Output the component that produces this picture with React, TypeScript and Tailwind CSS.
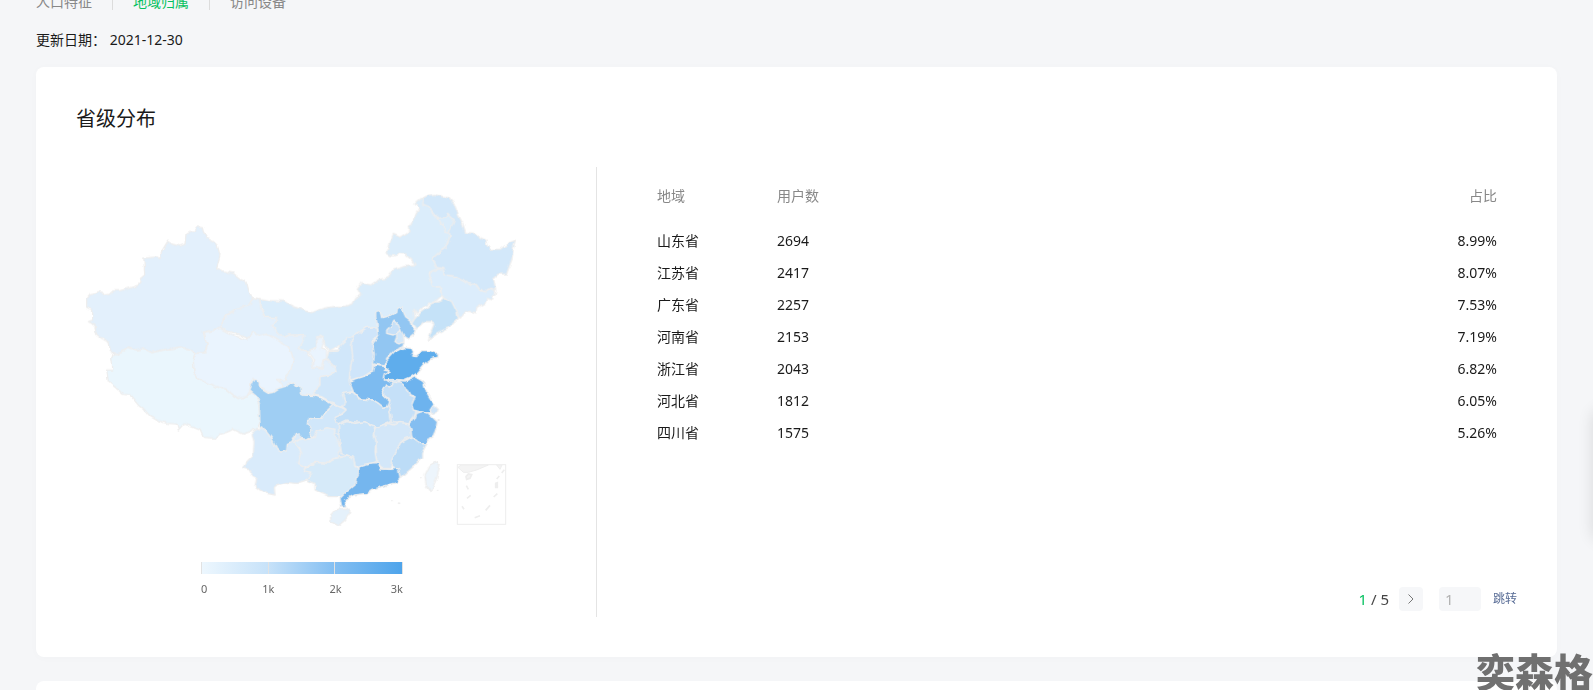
import { useState } from 'react';
import type { FormEvent } from 'react';

type Region = {
  name: string;
  users: number;
  share: string;
};

type Province = {
  id: string;
  fill: string;
  points: string;
};

type Sheet = {
  id: string;
  transform: string;
  provinces: Province[];
};

const TABS = ['人口特征', '地域归属', '访问设备'];

const REGIONS: Region[] = [
  { name: '山东省', users: 2694, share: '8.99%' },
  { name: '江苏省', users: 2417, share: '8.07%' },
  { name: '广东省', users: 2257, share: '7.53%' },
  { name: '河南省', users: 2153, share: '7.19%' },
  { name: '浙江省', users: 2043, share: '6.82%' },
  { name: '河北省', users: 1812, share: '6.05%' },
  { name: '四川省', users: 1575, share: '5.26%' },
];

const PAGE_COUNT = 5;

// Each sheet has its own origin, later sheets are painted over earlier ones.
const SHEETS: Sheet[] = [
  {
    id: 'northeast',
    transform: 'translate(690 0)',
    provinces: [
      {
        id: 'neimenggu',
        fill: '#dbedfb',
        points:
          '-122,356 -90,362 -50,363 -20,380 15,392 35,398 70,385 100,380 140,378 155,372 165,355 182,345 172,325 185,308 200,312 215,315 240,298 262,295 278,272 310,260 345,257 335,240 315,222 300,220 290,226 275,228 258,218 268,190 280,163 300,172 330,152 328,140 345,108 358,85 345,72 360,58 372,52 390,80 400,105 412,115 440,105 450,100 463,120 448,150 450,170 435,205 420,215 398,235 410,260 430,265 388,280 398,320 420,325 425,348 405,365 370,380 350,400 342,388 345,415 335,430 300,440 230,445 215,440 165,465 150,475 120,495 90,515 75,500 70,470 60,465 50,500 30,520 10,510 -5,515 -30,510 -50,475 -85,435 -70,412 -107,412',
      },
      {
        id: 'heilongjiang',
        fill: '#d3e8fa',
        points:
          '372,52 388,45 405,43 430,50 450,55 462,70 475,105 488,130 497,158 525,160 545,175 558,180 560,195 570,208 600,208 625,190 647,180 640,205 635,240 622,275 620,282 595,282 580,295 587,330 570,325 555,335 545,328 540,332 525,310 515,318 490,300 470,290 435,285 425,265 410,262 398,235 420,215 435,205 450,170 448,155 437,150 430,135 415,118 395,95 388,80 368,72',
      },
      {
        id: 'daxinganling',
        fill: '#dbedfb',
        points: '412,115 435,112 443,100 463,120 455,140 448,156 436,153 430,135 420,130',
      },
      {
        id: 'jilin',
        fill: '#dcedfc',
        points:
          '388,280 410,268 428,265 435,285 470,290 490,300 515,318 525,310 540,332 555,335 570,325 587,333 585,345 575,350 575,360 560,355 555,370 530,385 528,398 500,392 480,415 470,395 455,365 435,352 425,348 422,325 398,320',
      },
      {
        id: 'liaoning',
        fill: '#c5e2f8',
        points:
          '435,352 455,365 470,395 475,415 450,440 420,455 385,480 390,462 402,432 392,425 375,425 360,440 348,447 335,430 345,415 365,395 400,370 425,362',
      },
    ],
  },
  {
    id: 'northwest',
    transform: 'translate(480 300)',
    provinces: [
      {
        id: 'gansu',
        fill: '#e3f0fc',
        points:
          '68,53 88,56 92,80 103,112 135,113 142,122 125,135 160,172 175,165 205,165 222,163 220,180 205,205 230,215 245,235 250,262 275,265 280,240 292,237 318,262 315,278 300,285 270,290 270,315 255,330 258,345 220,350 180,330 145,330 150,300 188,250 150,200 70,180 -30,145 -15,110 20,85 60,72',
      },
    ],
  },
  {
    id: 'xinjiang',
    transform: 'translate(0 0)',
    provinces: [
      {
        id: 'xinjiang',
        fill: '#e3f0fc',
        points:
          '50,358 60,345 80,340 85,335 97,337 102,345 118,343 130,332 150,332 205,316 212,295 224,285 222,240 218,235 258,231 270,235 276,212 293,184 308,193 330,198 345,193 348,162 370,155 380,141 397,143 400,155 412,175 430,185 442,197 450,225 440,263 455,272 490,280 515,300 530,308 540,345 548,353 540,372 520,380 495,390 465,408 460,425 450,445 425,452 400,457 408,470 412,490 405,515 395,522 375,518 365,510 345,505 330,502 300,507 270,512 245,518 220,505 200,510 175,502 160,515 145,522 130,518 120,510 118,488 95,475 80,463 75,440 65,430 55,425 68,420 68,390 50,382',
      },
    ],
  },
  {
    id: 'plateau',
    transform: 'translate(0 450)',
    provinces: [
      {
        id: 'xizang',
        fill: '#eaf6fd',
        points:
          '130,70 145,72 160,65 175,52 200,60 220,55 245,68 270,62 300,57 330,52 365,60 375,70 370,90 372,125 385,148 410,158 440,170 470,178 490,195 505,205 520,200 535,195 545,182 560,200 567,225 569,280 560,300 550,295 540,305 520,312 490,298 470,307 450,312 435,325 400,322 390,300 370,292 345,282 335,288 325,300 320,282 290,280 260,270 240,258 220,235 205,225 180,195 160,193 140,175 115,155 110,120 128,120 127,100 125,85',
      },
      {
        id: 'qinghai',
        fill: '#eaf4fe',
        points:
          '400,7 425,2 450,-5 475,8 500,20 530,30 540,20 550,5 570,17 590,12 615,25 635,38 655,50 665,70 672,95 660,125 645,140 650,150 620,148 640,165 640,177 625,185 610,193 590,185 570,172 553,147 543,155 540,182 530,200 505,205 490,195 470,178 440,170 410,158 385,148 372,125 370,90 378,70 405,68 412,45 404,25',
      },
    ],
  },
  {
    id: 'central',
    transform: 'translate(480 300)',
    provinces: [
      {
        id: 'base',
        fill: '#d1e7fa',
        points: '345,210 440,180 500,210 530,240 530,300 585,400 560,480 500,550 450,560 330,530 260,450 300,370',
      },
      {
        id: 'ningxia',
        fill: '#eaf4fe',
        points: '260,170 280,170 282,188 275,207 290,212 290,235 278,240 275,268 262,262 250,265 250,235 235,215 260,205',
      },
      {
        id: 'shaanxi',
        fill: '#d1e7fa',
        points:
          '370,170 365,200 368,230 362,260 357,300 370,335 345,340 337,342 345,370 338,380 300,365 275,350 255,345 255,330 270,315 270,290 300,285 318,275 315,262 290,237 295,215 325,213 335,190 355,172',
      },
      {
        id: 'shanxi',
        fill: '#cfe5fa',
        points: '370,170 385,160 410,143 440,140 445,165 430,180 428,190 433,225 430,270 400,290 360,300 362,260 368,230 365,200',
      },
      {
        id: 'hebei',
        fill: '#92c6f2',
        points:
          '437,97 450,95 455,113 485,105 500,98 502,85 515,80 520,95 527,110 540,120 545,140 558,155 550,165 535,177 520,165 522,190 518,200 495,210 470,235 465,258 430,252 433,225 428,190 437,180 445,165 443,140 437,115',
      },
      { id: 'beijing', fill: '#c6e0f8', points: '470,150 485,135 492,123 505,135 512,150 500,160 490,165 470,160' },
      { id: 'tianjin', fill: '#d3e8fa', points: '500,160 512,150 520,165 522,185 510,192 495,185 500,170' },
      {
        id: 'henan',
        fill: '#7dbbf0',
        points:
          '357,303 400,290 430,275 435,255 468,260 460,270 480,275 460,292 470,300 492,310 480,320 470,315 455,340 480,365 475,378 460,382 445,370 430,360 390,357 370,335',
      },
      {
        id: 'hubei',
        fill: '#c2dff8',
        points:
          '337,340 368,336 390,357 430,360 445,370 460,382 475,380 482,405 485,425 470,430 440,447 410,428 370,425 350,420 325,432 310,412 335,402 348,388 338,380 345,365',
      },
      {
        id: 'anhui',
        fill: '#c5e0f8',
        points:
          '492,305 500,308 510,302 520,310 525,320 540,345 555,352 545,375 558,395 550,415 535,432 520,430 485,428 482,405 475,378 480,360 455,340 470,315 485,318',
      },
      {
        id: 'shandong',
        fill: '#5fadec',
        points:
          '520,203 545,205 550,215 545,228 560,230 575,212 600,212 625,220 622,232 605,235 585,250 560,280 545,290 520,300 495,298 460,300 462,285 480,275 468,265 470,240 490,218',
      },
      {
        id: 'jiangsu',
        fill: '#6db3ee',
        points: '505,302 530,303 555,290 580,305 590,335 605,360 615,372 605,385 600,398 580,398 550,390 545,375 555,350 540,345 525,318',
      },
      { id: 'shanghai', fill: '#cfe5f9', points: '600,390 610,375 622,385 618,398 605,402' },
      {
        id: 'zhejiang',
        fill: '#84bef1',
        points: '560,400 575,395 595,400 622,425 618,445 610,470 600,475 590,492 560,490 550,475 535,450 535,440 555,415',
      },
      {
        id: 'chongqing',
        fill: '#d1e7fa',
        points: '305,370 330,380 348,390 335,402 312,412 325,430 328,460 310,458 300,448 280,450 255,475 240,462 232,430 240,412 275,415',
      },
    ],
  },
  {
    id: 'south',
    transform: 'translate(480 660)',
    provinces: [
      {
        id: 'yunnan',
        fill: '#d9ebfb',
        points:
          '90,90 97,80 105,90 125,115 140,145 152,156 170,152 172,130 190,120 195,102 210,98 215,115 195,125 210,150 215,165 208,190 225,200 222,210 245,222 235,238 200,250 170,247 140,255 133,262 135,285 110,280 90,270 75,258 80,235 65,230 65,210 40,205 50,185 70,165 72,125 65,100 75,85',
      },
      {
        id: 'sichuan',
        fill: '#9fcef3',
        points:
          '63,-45 73,-65 87,-50 90,-35 115,-20 130,-22 145,-32 170,-38 175,-50 188,-55 195,-42 212,-38 215,-15 255,-13 285,0 308,13 290,30 275,55 240,52 232,70 245,90 240,102 252,115 235,112 225,120 212,115 210,98 195,102 185,125 172,130 170,152 152,156 140,145 125,115 105,90 97,80 90,90 88,10 78,-15 60,-30',
      },
      {
        id: 'guizhou',
        fill: '#ddedfb',
        points:
          '240,115 252,113 258,95 290,83 315,88 312,105 322,120 332,145 325,165 335,172 310,175 295,190 255,187 225,200 205,190 215,160 208,145 190,130 210,118',
      },
      {
        id: 'hunan',
        fill: '#c9e3f9',
        points: '325,75 350,65 375,70 405,65 420,75 435,80 430,100 438,120 435,155 440,185 420,190 390,197 375,200 370,172 350,165 335,160 328,120',
      },
      {
        id: 'jiangxi',
        fill: '#d3e7f9',
        points: '435,85 450,78 475,70 490,75 510,67 535,72 543,88 545,110 525,115 510,130 500,150 485,185 482,205 455,205 440,188 438,120 430,100',
      },
      {
        id: 'fujian',
        fill: '#bcdcf7',
        points: '545,110 560,118 570,130 590,132 575,160 575,175 550,200 530,218 512,235 500,210 485,200 485,180 500,150 512,128',
      },
      {
        id: 'guangxi',
        fill: '#d6eaf9',
        points:
          '225,205 255,187 295,190 310,177 335,172 350,165 370,172 375,200 390,205 385,230 375,255 345,283 330,290 300,290 275,280 255,270 255,250 230,240 245,220 220,215',
      },
      {
        id: 'guangdong',
        fill: '#75b6ee',
        points:
          '388,197 415,190 445,188 450,207 482,208 505,205 510,235 500,248 455,260 425,268 410,280 370,285 345,298 348,318 335,320 330,295 345,280 375,255 378,235 385,222',
      },
      { id: 'hainan', fill: '#e5f1fb', points: '302,345 315,330 350,324 362,335 345,360 325,377 302,365' },
      { id: 'taiwan', fill: '#edf5fc', points: '585,225 600,195 620,185 630,192 620,235 608,262 603,275 588,255' },
    ],
  },
];

function ChinaMap() {
  return (
    <svg viewBox="18 -39 1560 1155" className="block w-full" role="img" aria-label="省级分布">
      <defs>
        {/* roughens the borders so they read as coastlines and rivers */}
        <filter id="coast" x="0" y="0" width="1" height="1" colorInterpolationFilters="sRGB">
          <feTurbulence type="fractalNoise" baseFrequency="0.06" numOctaves="1" seed="4" result="noise" />
          <feDisplacementMap in="SourceGraphic" in2="noise" scale="14" xChannelSelector="R" yChannelSelector="G" />
        </filter>
      </defs>
      <g filter="url(#coast)" stroke="#eeeeee" strokeWidth="4" strokeLinejoin="round">
        {SHEETS.map((sheet) => (
          <g key={sheet.id} transform={sheet.transform}>
            {sheet.provinces.map((p) => (
              <polygon key={p.id} points={p.points} fill={p.fill} />
            ))}
          </g>
        ))}
      </g>
      <g fill="#e9e9e9">
        <circle cx="966" cy="962" r="2" />
        <circle cx="987" cy="970" r="3" />
        <circle cx="1053" cy="893" r="2" />
        <circle cx="1103" cy="931" r="2" />
        <circle cx="1106" cy="720" r="3" />
      </g>
      {/* South China Sea inset */}
      <g transform="translate(690 450)" fill="#f4f4f4" stroke="#eeeeee" strokeWidth="3">
        <rect x="472" y="404" width="145" height="179" fill="none" />
        <path d="M474 412 483 405 H565 L530 420 505 427 490 427Z M590 405 H606 L600 418Z" />
        <path d="M498 440 505 432 515 434 510 445 500 448Z M499 467 505 478 M501 505 512 496 M486 529 492 538 M524 563 540 557 M557 541 570 526 M581 501 592 491 M587 460 V472 H592 V458Z M590 447 598 438 M605 429 613 419" strokeWidth="5" />
      </g>
    </svg>
  );
}

function MapLegend() {
  return (
    <div className="ml-[125px] mt-2.5 w-[202px]">
      <div className="grid h-3 grid-cols-3 divide-x divide-[#e2e2e2] border-x border-[#e2e2e2] bg-[linear-gradient(to_right,#edf7fe,#c7e2f9_33%,#84bff2_66%,#4ea4eb)]">
        <span />
        <span />
        <span />
      </div>
      <div className="mt-[7px] grid grid-cols-6 text-[11px] leading-4 text-[#666]">
        <span>0</span>
        <span className="col-span-2 text-center">1k</span>
        <span className="col-span-2 text-center">2k</span>
        <span className="text-right">3k</span>
      </div>
    </div>
  );
}

function RegionTable() {
  return (
    <table className="w-full text-sm text-[#1a1a1a]">
      <thead>
        <tr className="h-[58px] text-left text-[#888]">
          <th className="w-[120px] font-normal">地域</th>
          <th className="font-normal">用户数</th>
          <th className="text-right font-normal">占比</th>
        </tr>
      </thead>
      <tbody>
        {REGIONS.map((region) => (
          <tr key={region.name} className="h-8">
            <td>{region.name}</td>
            <td>{region.users}</td>
            <td className="text-right">{region.share}</td>
          </tr>
        ))}
      </tbody>
    </table>
  );
}

function Pagination() {
  const [page, setPage] = useState(1);
  const [target, setTarget] = useState('');

  const jump = (e: FormEvent) => {
    e.preventDefault();
    const next = Number(target);
    if (next >= 1 && next <= PAGE_COUNT) setPage(next);
  };

  return (
    <form onSubmit={jump} className="flex items-center justify-end text-[15px] leading-6">
      <span className="text-[#444]">
        <span className="text-[#07c160]">{page}</span> / {PAGE_COUNT}
      </span>
      <button
        type="button"
        aria-label="下一页"
        onClick={() => setPage(Math.min(page + 1, PAGE_COUNT))}
        className="ml-2.5 flex h-6 w-6 items-center justify-center rounded-sm bg-[#f6f7f9]"
      >
        <svg viewBox="0 0 6 10" className="h-2.5 w-1.5" fill="none" stroke="#777" strokeWidth="1">
          <path d="M.5.5 5 5 .5 9.5" />
        </svg>
      </button>
      <input
        aria-label="页码"
        placeholder="1"
        value={target}
        onChange={(e) => setTarget(e.target.value)}
        className="ml-4 h-6 w-[42px] rounded-sm bg-[#f6f7f9] px-1.5 text-[#444] outline-none placeholder:text-[#b2b2b2]"
      />
      <button type="submit" className="ml-3 text-xs text-[#576b95]">
        跳转
      </button>
    </form>
  );
}

export default function App() {
  const [tab, setTab] = useState(1);

  return (
    <div className="relative flex min-h-screen flex-col overflow-hidden bg-[#f5f6f8] px-9 font-['Noto_Sans','Noto_Sans_CJK_SC',sans-serif] text-[#1a1a1a]">
      <nav className="-mt-2 flex items-center gap-5 text-sm leading-5">
        {TABS.map((label, i) => (
          <div key={label} className="flex items-center gap-5">
            {i > 0 && <span className="h-4 w-px bg-[#dcdcdc]" />}
            <button
              type="button"
              onClick={() => setTab(i)}
              className={i === tab ? 'text-[#07c160]' : 'text-[#888]'}
            >
              {label}
            </button>
          </div>
        ))}
      </nav>

      <p className="mt-[18px] text-sm leading-5">更新日期： 2021-12-30</p>

      <section className="mt-[17px] rounded-lg bg-white p-10 shadow-[0_1px_10px_rgba(0,0,0,0.02)]">
        <h2 className="text-xl leading-6">省级分布</h2>
        <div className="mt-9 flex min-h-[450px]">
          <div className="w-[520px] shrink-0">
            <ChinaMap />
            <MapLegend />
          </div>
          <div className="flex flex-1 flex-col justify-between border-l border-[#e4e4e4] pb-1.5 pl-[60px]">
            <div className="pr-5">
              <RegionTable />
            </div>
            <Pagination />
          </div>
        </div>
      </section>

      <section className="mt-6 flex-1 rounded-t-lg bg-white" />

      <div className="absolute -right-10 top-[410px] h-[130px] w-10 rounded-lg bg-white shadow-[0_0_16px_rgba(0,0,0,0.12)]" />
      <div className="absolute bottom-0 right-0 font-['Noto_Sans_CJK_SC',sans-serif] text-[39px] font-black leading-10 text-[#707070]">
        奕森格
      </div>
    </div>
  );
}
